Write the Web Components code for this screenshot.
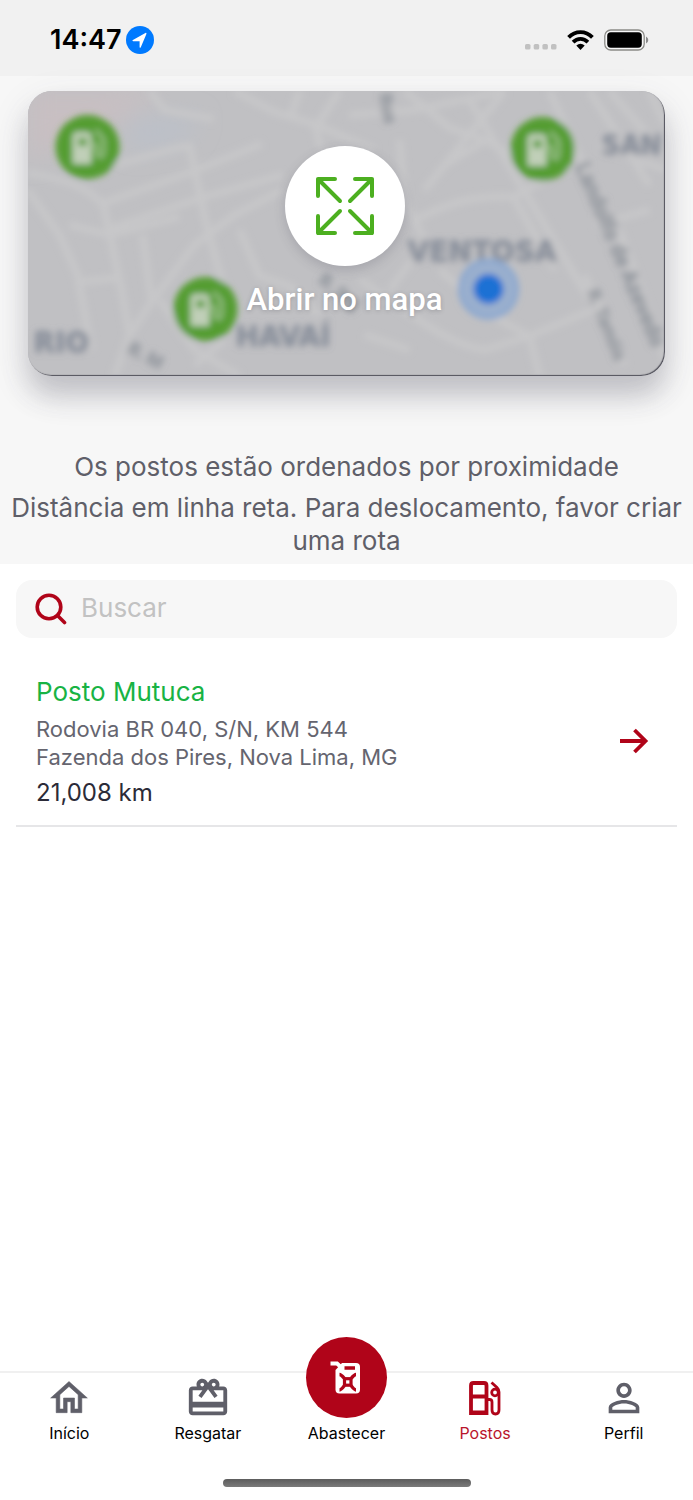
<!DOCTYPE html>
<html lang="pt-BR">
<head>
<meta charset="utf-8">
<meta name="viewport" content="width=device-width, initial-scale=1">
<title>Postos</title>
<style>
  body {
    margin: 0;
    background: #fff;
    font-family: Inter, "Liberation Sans", sans-serif;
    color: #5f5f69;
  }
</style>
</head>
<body>

<app-screen>
  <status-bar slot="status">14:47</status-bar>
  <section-intro>
    <map-card slot="map">Abrir no mapa</map-card>
    <p>Os postos estão ordenados por proximidade</p>
    <p>Distância em linha reta. Para deslocamento, favor criar uma rota</p>
  </section-intro>
  <search-box placeholder="Buscar"></search-box>
  <station-item href="#posto-mutuca">
    <span slot="name">Posto Mutuca</span>
    <span slot="street">Rodovia BR 040, S/N, KM 544</span>
    <span slot="city">Fazenda dos Pires, Nova Lima, MG</span>
    <span slot="distance">21,008 km</span>
  </station-item>
  <tab-bar slot="tabs">
    <tab-item icon="home">Início</tab-item>
    <tab-item icon="gift">Resgatar</tab-item>
    <tab-item icon="can" main>Abastecer</tab-item>
    <tab-item icon="pump" active>Postos</tab-item>
    <tab-item icon="person">Perfil</tab-item>
  </tab-bar>
</app-screen>

<script>
// ----------------------------
// Helper
// ----------------------------

function define(name, render) {
  customElements.define(
    name,
    class extends HTMLElement {
      constructor() {
        super();
        this.attachShadow({ mode: "open" }).innerHTML = render(this);
      }
    }
  );
}

// ----------------------------
// Screen
// ----------------------------

define("app-screen", () => `
<style>
  :host { display: flex; flex-direction: column; min-height: 100vh; }
  main { flex: 1; }
</style>
<slot name="status"></slot>
<main><slot></slot></main>
<slot name="tabs"></slot>
`);

// ----------------------------
// Status bar
// ----------------------------

define("status-bar", () => `
<style>
  :host {
    display: flex;
    align-items: center;
    box-sizing: border-box;
    height: 76px;
    padding: 4px 44px 0 50px;
    background: #f1f1f1;
    color: #000;
    font-size: 27px;
    font-weight: 600;
    line-height: 32px;
  }
  .place { margin-left: 4px; }
  .right { display: flex; align-items: center; gap: 10px; margin-left: auto; }
  svg { display: block; }
</style>
<slot></slot>
<svg class="place" width="28" height="28" viewBox="0 0 28 28" aria-hidden="true">
  <circle cx="14" cy="14" r="14" fill="#007aff"/>
  <path d="M20.4 7.9 14.8 21.2q-.9 1.3-1.200-.3V15.200H7.200q-1.700-.2-.3-1.200L19.400 6.900q1.300-.4 1 1z" fill="#fff"/>
</svg>
<div class="right">
  <svg width="32" height="20" viewBox="0 0 32 20" fill="#c1c1c1" aria-hidden="true">
    <rect x="0" y="14" width="5.500" height="5.500" rx="1.600"/>
    <rect x="8.700" y="14" width="5.500" height="5.500" rx="1.600"/>
    <rect x="17.400" y="14" width="5.500" height="5.500" rx="1.600"/>
    <rect x="26" y="14" width="5.500" height="5.500" rx="1.600"/>
  </svg>
  <svg width="27" height="20" viewBox="0 0 27 20" fill="none" stroke="#000" stroke-width="3.800" aria-hidden="true">
    <path d="M1.600 7.400C8.300.3 18.700.3 25.400 7.400"/>
    <path d="M6.100 12.100C10.300 7.800 16.700 7.800 20.900 12.100"/>
    <path d="M9.300 15.600Q13.500 12 17.700 15.600L13.500 20z" fill="#000" stroke="none"/>
  </svg>
  <svg width="45" height="22" viewBox="0 0 45 22" aria-hidden="true">
    <rect x=".8" y="1" width="39.400" height="20" rx="6" fill="#fff" fill-opacity=".5" stroke="#8b8b87" stroke-width="1.300"/>
    <rect x="3.200" y="3.300" width="34.600" height="15.400" rx="3.600" fill="#000"/>
    <path d="M42 7.500q2.300 1.200 2.300 3.500T42 14.500z" fill="#8b8b8b"/>
  </svg>
</div>
`);

// ----------------------------
// Intro with map
// ----------------------------

define("section-intro", () => `
<style>
  :host {
    display: block;
    padding: 15px 8px 7px;
    background: #f7f7f7;
    text-align: center;
    font-size: 26px;
    line-height: 33px;
  }
  .map { margin: 0 20px 74px; }
  ::slotted(p) { margin: 8px 0 0; }
</style>
<div class="map"><slot name="map"></slot></div>
<slot></slot>
`);

const pin = (x, y) => `
<g transform="translate(${x} ${y})">
  <circle r="32" fill="#559d32"/>
  <path d="M-15 17V-10q0-5 5-5H-1q5 0 5 5V17zM-9-9V-1H-1V-9z" fill="#c0cfb8" fill-rule="evenodd"/>
  <path d="M8-17l8 9V6q-2 7-7 1V-2H5" fill="none" stroke="#92bb80" stroke-width="4"/>
</g>`;

define("map-card", () => `
<style>
  :host { display: block; }
  button {
    display: grid;
    box-sizing: border-box;
    width: 100%;
    height: 285px;
    padding: 0;
    border: 0;
    border-radius: 24px;
    overflow: hidden;
    background: #c0c0c3;
    color: #fff;
    font: 500 31px/40px Roboto, "Liberation Sans", sans-serif;
    text-shadow: 0 1px 4px rgba(70, 70, 80, .3);
    box-shadow: 0 20px 26px rgba(75, 75, 90, .24), 0 14px 40px rgba(75, 75, 90, .12);
    cursor: pointer;
  }
  button > * { grid-area: 1 / 1; }
  .map { width: 100%; height: 285px; }
  .front {
    display: flex;
    flex-direction: column;
    align-items: center;
    gap: 14px;
    box-sizing: border-box;
    height: 285px;
    padding: 55px 4px 0 0;
    border-radius: 24px;
    box-shadow: inset -1px -1px 1px #50505a;
    z-index: 1;
  }
  .round {
    display: grid;
    place-items: center;
    width: 120px;
    height: 120px;
    border-radius: 50%;
    background: #fff;
    box-shadow: 0 4px 12px rgba(60, 60, 80, .2);
  }
</style>
<button type="button">
  <svg class="map" viewBox="28 91 638 285" preserveAspectRatio="xMidYMid slice" aria-hidden="true">
    <defs>
      <filter id="soft" x="-10%" y="-10%" width="120%" height="120%"><feGaussianBlur stdDeviation="3"/></filter>
      <filter id="wide" x="-50%" y="-50%" width="200%" height="200%"><feGaussianBlur stdDeviation="12"/></filter>
    </defs>
    <rect x="28" y="91" width="638" height="285" fill="#c0c0c3"/>
    <g filter="url(#wide)">
      <path d="M28 91H165L125 118 60 150 28 160z" fill="#c8bfc2"/>
      <path d="M130 118H200L185 140 130 150z" fill="#bbc0c9"/>
    </g>
    <g filter="url(#soft)">
      <g fill="none" stroke="#c7c7c9" stroke-width="7">
        <path d="M28 173C60 178 88 186 104 205L122 290 130 335"/>
        <path d="M104 203 192 172 262 144M112 228 205 197 283 175"/>
        <path d="M110 166C150 157 170 148 190 146L208 230 225 290"/>
        <path d="M28 190 60 235 78 275 92 350M70 225 110 235 180 217"/>
        <path d="M130 335 152 302 195 245 235 215 283 190M152 302 143 235M160 300 195 350 240 376"/>
        <path d="M80 282 118 278M130 335 115 376M195 365 225 340"/>
        <path d="M150 91 165 110 214 119M235 91 275 112 315 124 375 150M290 120 300 91M318 125 340 91M315 124 322 150"/>
        <path d="M350 115 415 110 505 91M405 91 430 111 450 128 486 140 520 160M505 91 425 190"/>
        <path d="M400 140 405 200 425 240M486 140 445 165M470 100 590 300"/>
        <path d="M550 91 595 190 626 260M590 91 650 185M610 91 666 155M650 91 666 125"/>
        <path d="M415 220C455 200 480 195 514 197L570 166M514 197 555 270M600 145 666 170"/>
        <path d="M360 280C410 310 440 342 485 350L530 336 605 305M530 336 540 376M365 335 410 350"/>
        <path d="M240 230 260 276 290 286 320 315M420 250 390 290M440 270 500 320 530 336"/>
        <path d="M595 225 650 210M620 230 666 360M585 275 625 365"/>
      </g>
      <g fill="#8a919d" font-family="DejaVu Sans, sans-serif" font-weight="bold" font-size="28">
        <text x="408" y="261">VENTOSA</text>
        <text x="602" y="154" font-size="26">SAN</text>
        <text x="236" y="346">HAVAÍ</text>
        <text x="34" y="352">RIO</text>
      </g>
      <g fill="#949aa1" font-family="Roboto, sans-serif" font-weight="bold" font-size="21">
        <text transform="translate(576 166) rotate(67)">Landolfo de Azevedo</text>
        <text transform="translate(588 292) rotate(68)" font-size="17">R. Tamóis</text>
        <text transform="translate(380 95) rotate(78)" font-size="17">Rua</text>
        <text transform="translate(127 352) rotate(28)" font-size="18">R. M</text>
        <text transform="translate(318 282) rotate(38)" font-size="18">R. Itaj</text>
      </g>
      ${pin(88, 147)}
      ${pin(543, 149)}
      ${pin(206, 309)}
      <circle cx="489" cy="289" r="28" fill="#9bb0cd" stroke="#8ca8d0" stroke-width="5"/>
      <circle cx="489" cy="289" r="15" fill="#1e71d4"/>
    </g>
  </svg>
  <span class="front">
    <span class="round">
      <svg width="60" height="60" viewBox="0 0 60 60" fill="none" stroke="#4caf20" stroke-width="4" stroke-linecap="round" stroke-linejoin="round" aria-hidden="true">
        <path d="M3 20V3H20M3 3 25 25M40 3H57V20M57 3 35 25M3 40V57H20M3 57 25 35M40 57H57V40M57 57 35 35"/>
      </svg>
    </span>
    <span><slot></slot></span>
  </span>
</button>
`);

// ----------------------------
// Search
// ----------------------------

define("search-box", (el) => `
<style>
  :host { display: block; padding: 16px 16px 0; }
  label {
    display: flex;
    align-items: center;
    gap: 14px;
    height: 58px;
    padding: 0 19px;
    border-radius: 16px;
    background: #f7f7f7;
  }
  input {
    flex: 1;
    min-width: 0;
    height: 40px;
    padding: 0 0 4px;
    border: 0;
    outline: 0;
    background: none;
    color: #2c2c36;
    font: inherit;
    font-size: 26px;
  }
  input::placeholder { color: #c2c2c2; }
</style>
<label>
  <svg width="32" height="32" viewBox="0 0 32 32" fill="none" stroke="#b00419" stroke-width="3.600" stroke-linecap="round" aria-hidden="true">
    <circle cx="14" cy="14" r="11.800"/>
    <path d="M22.500 22.500 29.500 29.500"/>
  </svg>
  <input type="search" placeholder="${el.getAttribute("placeholder")}" aria-label="${el.getAttribute("placeholder")}">
</label>
`);

// ----------------------------
// Station
// ----------------------------

define("station-item", (el) => `
<style>
  :host { display: block; padding: 0 16px; }
  a {
    display: flex;
    align-items: center;
    justify-content: space-between;
    padding: 37px 22px 18px 20px;
    border-bottom: 2px solid #e6e6e8;
    color: #65656f;
    font-size: 22px;
    line-height: 28px;
    text-decoration: none;
  }
  .text { display: flex; flex-direction: column; }
  .name { margin-bottom: 6px; color: #18b344; font-size: 26px; line-height: 34px; }
  .distance { margin-top: 8px; color: #2b2b38; font-size: 24px; }
</style>
<a href="${el.getAttribute("href")}">
  <div class="text">
    <div class="name"><slot name="name"></slot></div>
    <slot name="street"></slot>
    <slot name="city"></slot>
    <div class="distance"><slot name="distance"></slot></div>
  </div>
  <svg width="40" height="40" viewBox="0 0 40 40" fill="none" stroke="#b00419" stroke-width="3.800" aria-hidden="true">
    <path d="M5 20H30M19.500 9 30.500 20 19.500 31"/>
  </svg>
</a>
`);

// ----------------------------
// Tabs
// ----------------------------

const icons = {
  home: `<svg width="44" height="46" viewBox="0 0 24 24" fill="currentColor"><path stroke="currentColor" stroke-width=".3" d="M12 5.690l5 4.500V18h-2v-6H9v6H7v-7.810l5-4.500M12 3L2 12h3v8h6v-6h2v6h6v-8h3L12 3z"/></svg>`,
  gift: `<svg width="46" height="46" viewBox="0 0 24 24" fill="currentColor"><path d="M20 6h-2.180c.11-.31.18-.65.18-1 0-1.660-1.340-3-3-3-1.050 0-1.960.54-2.500 1.350l-.5.67-.5-.68C10.960 2.540 10.050 2 9 2 7.340 2 6 3.340 6 5c0 .35.07.69.18 1H4c-1.110 0-1.990.89-1.990 2L2 19c0 1.110.89 2 2 2h16c1.110 0 2-.89 2-2V8c0-1.110-.89-2-2-2zm-5-2c.55 0 1 .45 1 1s-.45 1-1 1-1-.45-1-1 .45-1 1-1zM9 4c.55 0 1 .45 1 1s-.45 1-1 1-1-.45-1-1 .45-1 1-1zm11 15H4v-2h16v2zm0-5H4V8h5.080L7 10.830 8.620 12 11 8.760l1-1.360 1 1.360L15.380 12 17 10.830 14.920 8H20v6z"/></svg>`,
  person: `<svg width="46" height="46" viewBox="0 0 24 24" fill="currentColor"><path d="M12 5.900c1.160 0 2.100.94 2.100 2.100s-.94 2.100-2.100 2.100S9.900 9.160 9.900 8s.94-2.100 2.100-2.100m0 9c2.970 0 6.100 1.460 6.100 2.100v1.100H5.900V17c0-.64 3.130-2.100 6.100-2.100M12 4C9.790 4 8 5.790 8 8s1.790 4 4 4 4-1.790 4-4-1.790-4-4-4zm0 9c-2.670 0-8 1.340-8 4v3h16v-3c0-2.660-5.330-4-8-4z"/></svg>`,
  pump: `<svg width="46" height="46" viewBox="0 0 46 46" fill="none" stroke="currentColor">
    <path d="M9 38.200V10.500Q9 8 11.500 8H22Q24.500 8 24.500 10.500V38.200zM9 21.500H24.500" stroke-width="3.800"/>
    <path d="M9 37.500H24.500" stroke-width="4"/>
    <path d="M25 24.500H27.500Q30 24.500 30 27V35Q30 39 33.500 39T37 35V17Q37 14.500 35 12.500L29.500 7.500" stroke-width="2.800"/>
    <circle cx="33" cy="17.500" r="3.300" stroke-width="2.800"/>
  </svg>`,
  can: `<svg width="46" height="46" viewBox="0 0 46 46" fill="none">
    <path d="M7.500 8.500H14L19 13" stroke="#fff" stroke-width="4"/>
    <path d="M12.500 15 19 8H33Q37 8 37 12V34.500Q37 38.500 33 38.500H16.500Q12.500 38.500 12.500 34.500z" fill="#fff"/>
    <path d="M21.500 13H32M16.500 19.500Q18 19.500 21.500 23.500M33 19.500Q31.500 19.500 28 23.500M16.500 35Q18 35 21.500 30.500M33 35Q31.500 35 28 30.500" stroke="#b00419" stroke-width="3.400"/>
    <rect x="21.500" y="23.700" width="6.500" height="6.500" fill="#fff" stroke="#b00419" stroke-width="3.200"/>
  </svg>`,
};

define("tab-bar", () => `
<style>
  :host { display: block; border-top: 2px solid #f0f0f0; background: #fff; }
  nav { display: grid; grid-template-columns: repeat(5, 1fr); }
  .home-line {
    width: 248px;
    height: 8px;
    margin: 36px auto 13px;
    border-radius: 4px;
    background: linear-gradient(#5c5c5c, #7a7a7a);
  }
</style>
<nav><slot></slot></nav>
<div class="home-line"></div>
`);

define("tab-item", (el) => `
<style>
  :host { display: block; }
  button {
    display: flex;
    flex-direction: column;
    align-items: center;
    gap: 2px;
    width: 100%;
    padding: 2px 0 0;
    border: 0;
    background: none;
    color: #000;
    font: inherit;
    font-size: 16px;
    line-height: 20px;
    cursor: pointer;
  }
  svg { display: block; }
  .icon { color: #5f5f69; }
  :host([active]) button { color: #b9152c; }
  :host([active]) .icon { color: #b00419; }
  :host([main]) .icon {
    display: grid;
    place-items: center;
    width: 81px;
    height: 81px;
    margin: -38px 0 3px;
    border-radius: 50%;
    background: #b00419;
  }
</style>
<button type="button" ${el.hasAttribute("active") ? 'aria-current="page"' : ""}>
  <span class="icon" aria-hidden="true">${icons[el.getAttribute("icon")]}</span>
  <span><slot></slot></span>
</button>
`);
</script>
</body>
</html>
